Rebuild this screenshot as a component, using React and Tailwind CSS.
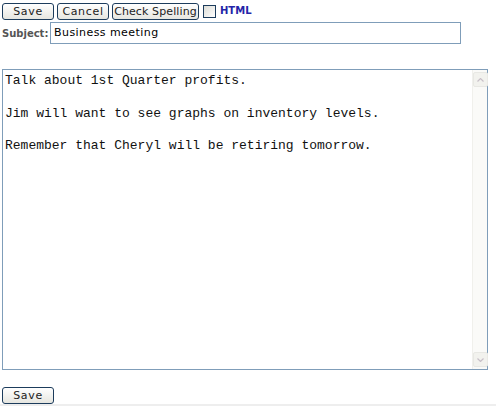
import React from "react";

function Btn({ children, className = "" }) {
    return (
        <button
            type="button"
            className={"h-[17px] whitespace-nowrap rounded-[3px] border border-[#1c3c5c] bg-gradient-to-b from-white to-[#e6e6e0] text-[11px] leading-none text-[#222] [font-family:'DejaVu_Sans',Verdana,sans-serif] " + className}
        >
            {children}
        </button>
    );
}

export default function App() {
    const body = "Talk about 1st Quarter profits.\n\nJim will want to see graphs on inventory levels.\n\nRemember that Cheryl will be retiring tomorrow.";

    return (
        <div className="w-[496px] h-[406px] bg-white relative overflow-hidden [font-family:'DejaVu_Sans',Verdana,sans-serif]">
            <div className="flex items-center gap-[3px] pl-[2px] pt-[3px]">
                <Btn className="w-[52px] px-[6px] tracking-[0.06em]">Save</Btn>
                <Btn className="w-[52px] px-[4px] tracking-[0.06em]">Cancel</Btn>
                <Btn className="w-[87px] px-0 tracking-[0.01em] text-[10.5px]">Check Spelling</Btn>
                <div className="ml-[1px] w-[13px] h-[13px] border border-[#1c3c5c] bg-gradient-to-br from-[#dcdcd6] to-white"></div>
                <span className="ml-[1px] text-[10px] font-bold text-[#2424a8] -mt-[2px]">HTML</span>
            </div>

            <div className="flex items-center pl-[2px] mt-[2px]">
                <span className="text-[10px] font-bold text-[#555] w-[48px]">Subject:</span>
                <div className="w-[411px] h-[22px] border border-[#7f9db9] flex items-center pl-[3px] text-[11px] tracking-[0.04em] text-black">
                    Business meeting
                </div>
            </div>

            <div className="ml-[2px] mt-[25px] w-[486px] h-[301px] border border-[#7f9db9] flex">
                <div className="flex-1 pl-[2px] pt-[3px] whitespace-pre text-[13px] leading-[16.3px] text-[#111] [font-family:'Liberation_Mono','Courier_New',monospace]">
                    {body}
                </div>
                <div className="w-[15px] flex flex-col justify-between bg-[#fafaf8] border-l border-[#f0f0ec] py-[2px]">
                    <div className="w-[15px] h-[15px] rounded-[2px] border border-[#e8e8e4] bg-[#f2f2ee] flex items-center justify-center">
                        <svg width="7" height="4" viewBox="0 0 7 4"><path d="M0.5 3.5 L3.5 0.5 L6.5 3.5" fill="none" stroke="#c8c0c8" strokeWidth="1.2" /></svg>
                    </div>
                    <div className="w-[15px] h-[15px] rounded-[2px] border border-[#e8e8e4] bg-[#f2f2ee] flex items-center justify-center">
                        <svg width="7" height="4" viewBox="0 0 7 4"><path d="M0.5 0.5 L3.5 3.5 L6.5 0.5" fill="none" stroke="#c8c0c8" strokeWidth="1.2" /></svg>
                    </div>
                </div>
            </div>

            <div className="flex pl-[2px] mt-[17px]">
                <Btn className="w-[52px] px-[6px] tracking-[0.06em]">Save</Btn>
            </div>
            <div className="absolute left-0 right-0 bottom-0 h-[2px] bg-[#eeeeee]"></div>
        </div>
    );
}
